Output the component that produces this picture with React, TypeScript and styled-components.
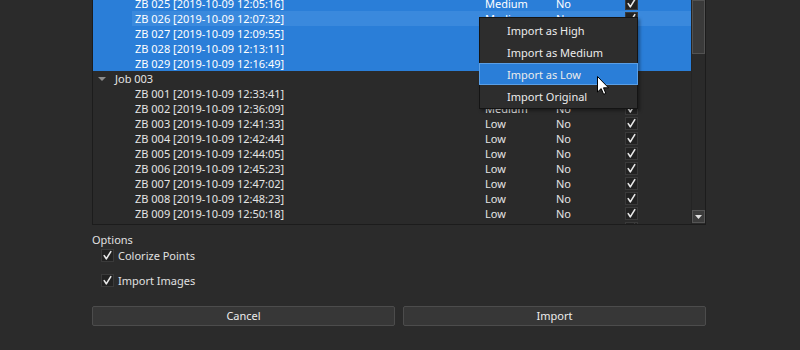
import * as React from "react";
import styled, { createGlobalStyle } from "styled-components";

const GlobalStyle = createGlobalStyle`
    body {
        margin: 0;
        background: #2b2b2b;
        font-family: "Noto Sans", "Liberation Sans", sans-serif;
        font-size: 11px;
        color: #e6e6e6;
    }
`

const Dialog = styled.div`
    position: relative;
    width: 800px;
    height: 350px;
    overflow: hidden;
    box-sizing: border-box;
    padding: 0 94px 0 92px;
    display: flex;
    flex-direction: column;
`

const TreePanel = styled.div`
    margin-top: -1px;
    height: 226px;
    box-sizing: border-box;
    border: 1px solid #1c1c1c;
    background: #2a2a2a;
    display: flex;
`

const Viewport = styled.div`
    flex: 1;
    overflow: hidden;
`

const RowList = styled.div`
    margin-top: -4px;
    display: flex;
    flex-direction: column;
`

const Row = styled.div<{ selected?: boolean }>`
    height: 15px;
    display: flex;
    align-items: center;
    background: ${p => p.selected ? '#2a7ed8' : 'transparent'};
    color: ${p => p.selected ? '#ffffff' : '#e4e4e4'};
`

const Indent = styled.div<{ width: number }>`
    width: ${p => p.width}px;
    flex: none;
    height: 100%;
    display: flex;
    align-items: center;
    padding-left: 5px;
    box-sizing: border-box;
`

const RowBody = styled.div<{ hovered?: boolean }>`
    flex: 1;
    height: 100%;
    display: grid;
    grid-template-columns: 1fr 71px 69px 66px;
    align-items: center;
    background: ${p => p.hovered ? '#3a89dd' : 'transparent'};
`

const Cell = styled.span<{ pad?: number }>`
    padding-left: ${p => p.pad ?? 0}px;
    white-space: nowrap;
    line-height: 15px;
`

const Expander = styled.span`
    width: 0;
    height: 0;
    border-left: 4px solid transparent;
    border-right: 4px solid transparent;
    border-top: 4px solid #8c8c8c;
`

const Box = styled.span`
    width: 13px;
    height: 13px;
    box-sizing: border-box;
    background: #222222;
    border: 1px solid #3a3a3a;
    display: flex;
    align-items: center;
    justify-content: center;
    flex: none;
`

const ScrollBar = styled.div`
    width: 14px;
    flex: none;
    border-left: 1px solid #242424;
    box-sizing: border-box;
    display: flex;
    flex-direction: column;
    justify-content: space-between;
    padding-bottom: 1px;
`

const Thumb = styled.div`
    height: 54px;
    box-sizing: border-box;
    border: 1px solid #525252;
    background: #3a3a3a;
`

const ScrollButton = styled.div`
    height: 13px;
    box-sizing: border-box;
    border: 1px solid #555555;
    background: #3c3c3c;
    display: flex;
    align-items: center;
    justify-content: center;
`

const OptionsTitle = styled.div`
    margin-top: 8px;
    line-height: 14px;
    color: #e0e0e0;
`

const OptionRow = styled.label<{ gapTop?: number }>`
    display: flex;
    align-items: center;
    gap: 4px;
    height: 16px;
    padding-left: 9px;
    margin-top: ${p => p.gapTop ?? 0}px;
    color: #e0e0e0;
`

const ButtonBar = styled.div`
    margin-top: 18px;
    display: flex;
    gap: 8px;
`

const Button = styled.button`
    flex: 1;
    height: 20px;
    background: #373737;
    border: 1px solid #4c4c4c;
    border-radius: 2px;
    color: #ececec;
    font-family: inherit;
    font-size: 11px;
    line-height: 16px;
    padding: 0;
`

const Menu = styled.div`
    position: absolute;
    left: 479px;
    top: 17px;
    width: 159px;
    box-sizing: border-box;
    background: #2d2d2d;
    border: 1px solid #141414;
    padding: 1px 0;
    box-shadow: 2px 2px 3px rgba(0, 0, 0, 0.35);
`

const MenuItem = styled.div<{ active?: boolean }>`
    height: 22px;
    box-sizing: border-box;
    padding-left: 27px;
    display: flex;
    align-items: center;
    color: #ececec;
    background: ${p => p.active ? '#2a7ed8' : 'transparent'};
    border: 1px solid ${p => p.active ? '#5a9fe6' : 'transparent'};
    margin: 0 -1px;
`

const Cursor = styled.svg`
    position: absolute;
    left: 597px;
    top: 76px;
`

function Check() {
    return <svg width="11" height="11" viewBox="0 0 11 11">
        <path d="M2.2 5.6 L4.3 8.8 L8.8 1.6" fill="none" stroke="#e8e8e8" strokeWidth="1.6" strokeLinecap="round" strokeLinejoin="round" />
    </svg>
}

type Item = { name: string; quality?: string; group?: boolean; selected?: boolean; hovered?: boolean };

const rows: Item[] = [
    { name: "ZB 025 [2019-10-09 12:05:16]", quality: "Medium", selected: true },
    { name: "ZB 026 [2019-10-09 12:07:32]", quality: "Medium", selected: true, hovered: true },
    { name: "ZB 027 [2019-10-09 12:09:55]", quality: "Medium", selected: true },
    { name: "ZB 028 [2019-10-09 12:13:11]", quality: "Medium", selected: true },
    { name: "ZB 029 [2019-10-09 12:16:49]", quality: "Medium", selected: true },
    { name: "Job 003", group: true },
    { name: "ZB 001 [2019-10-09 12:33:41]", quality: "Medium" },
    { name: "ZB 002 [2019-10-09 12:36:09]", quality: "Medium" },
    { name: "ZB 003 [2019-10-09 12:41:33]", quality: "Low" },
    { name: "ZB 004 [2019-10-09 12:42:44]", quality: "Low" },
    { name: "ZB 005 [2019-10-09 12:44:05]", quality: "Low" },
    { name: "ZB 006 [2019-10-09 12:45:23]", quality: "Low" },
    { name: "ZB 007 [2019-10-09 12:47:02]", quality: "Low" },
    { name: "ZB 008 [2019-10-09 12:48:23]", quality: "Low" },
    { name: "ZB 009 [2019-10-09 12:50:18]", quality: "Low" },
    { name: "ZB 010 [2019-10-09 12:52:40]", quality: "Low" },
];

export default function App() {
    return <Dialog>
        <GlobalStyle />
        <TreePanel>
            <Viewport>
                <RowList>
                    {rows.map(r => r.group
                        ? <Row key={r.name}>
                            <Indent width={19}><Expander /></Indent>
                            <RowBody><Cell pad={3}>{r.name}</Cell></RowBody>
                        </Row>
                        : <Row key={r.name} selected={r.selected}>
                            <Indent width={39} />
                            <RowBody hovered={r.hovered}>
                                <Cell pad={3}>{r.name}</Cell>
                                <Cell>{r.quality}</Cell>
                                <Cell>No</Cell>
                                <Box><Check /></Box>
                            </RowBody>
                        </Row>)}
                </RowList>
            </Viewport>
            <ScrollBar>
                <Thumb />
                <ScrollButton>
                    <svg width="7" height="4" viewBox="0 0 7 4"><path d="M0 0 H7 L3.5 4 Z" fill="#e0e0e0" /></svg>
                </ScrollButton>
            </ScrollBar>
        </TreePanel>

        <OptionsTitle>Options</OptionsTitle>
        <OptionRow><Box><Check /></Box>Colorize Points</OptionRow>
        <OptionRow gapTop={9}><Box><Check /></Box>Import Images</OptionRow>

        <ButtonBar>
            <Button>Cancel</Button>
            <Button>Import</Button>
        </ButtonBar>

        <Menu>
            <MenuItem>Import as High</MenuItem>
            <MenuItem>Import as Medium</MenuItem>
            <MenuItem active>Import as Low</MenuItem>
            <MenuItem>Import Original</MenuItem>
        </Menu>

        <Cursor width="13" height="20" viewBox="0 0 13 20">
            <path d="M0.5 0.5 L0.5 16 L4.2 12.6 L6.6 18.3 L8.8 17.4 L6.5 11.8 L11.5 11.8 Z" fill="#ffffff" stroke="#000000" strokeWidth="1" strokeLinejoin="miter" />
        </Cursor>
    </Dialog>
}
